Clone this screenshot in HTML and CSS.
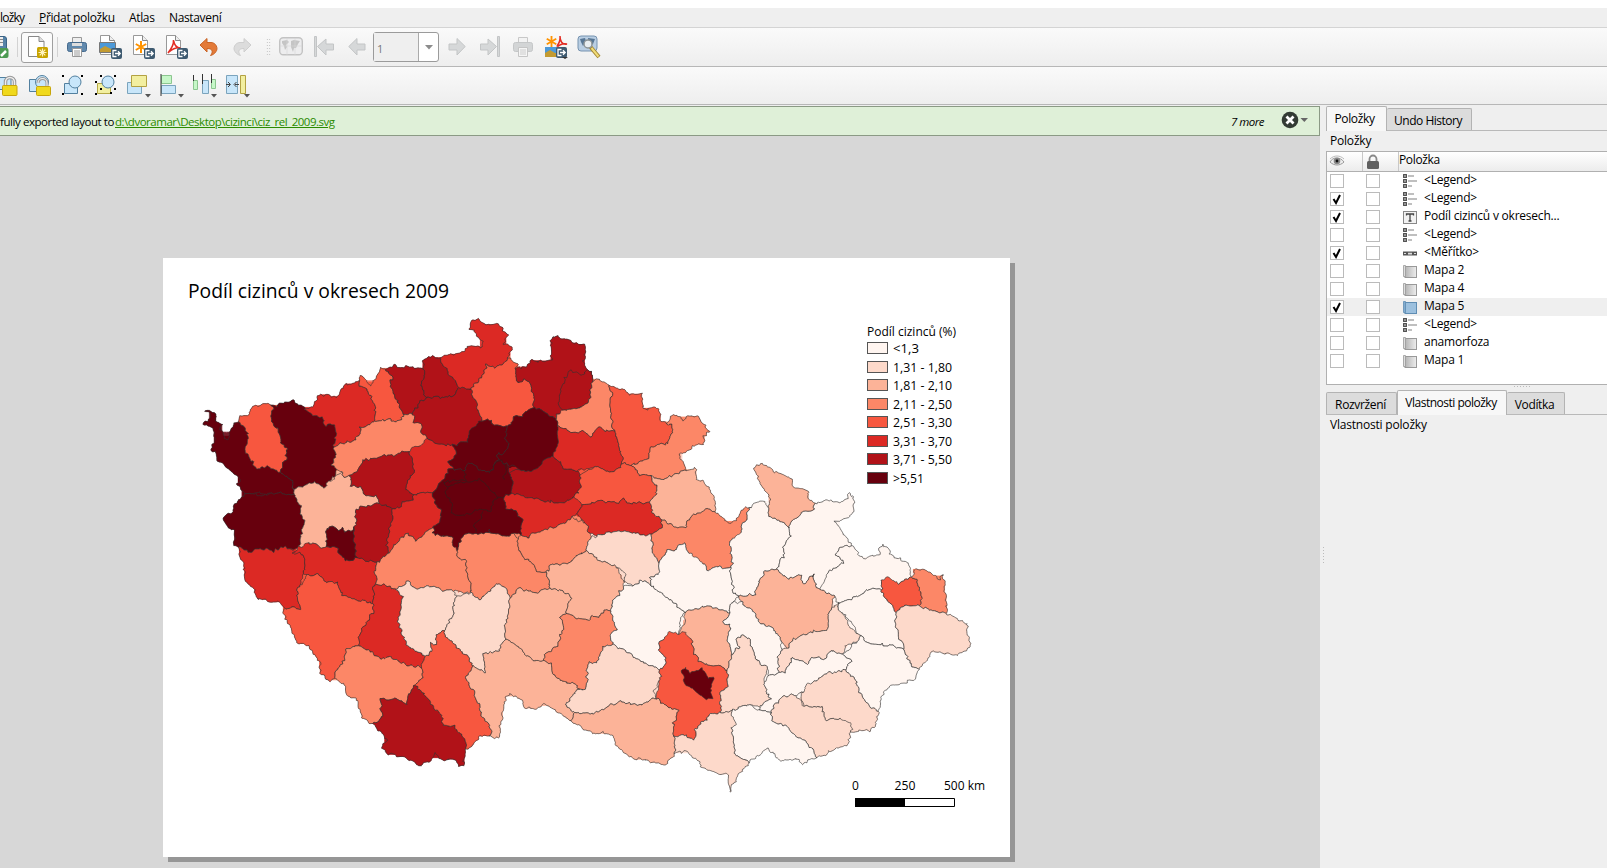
FILE: index.html
```html
<!DOCTYPE html>
<html lang="cs">
<head>
<meta charset="utf-8">
<title>Podíl cizinců v okresech 2009</title>
<link rel="stylesheet" href="styles.css">
</head>
<body>
<svg class="defs" width="0" height="0">
  <defs>
    <linearGradient id="gray" x1="0" x2="1"><stop offset="0" stop-color="#b4b4b4"/><stop offset="1" stop-color="#eee"/></linearGradient>
    <filter id="close" x="-5%" y="-5%" width="110%" height="110%" color-interpolation-filters="sRGB"><feMorphology in="SourceGraphic" operator="dilate" radius="3" result="wide"/><feMorphology in="wide" operator="erode" radius="3" result="tight"/><feComposite in="wide" in2="tight" operator="in"/></filter>
    <symbol id="legend" viewBox="0 0 14 14"><g fill="#fff" stroke="#4a4a4a" stroke-width="1.3"><rect x=".7" y=".7" width="2.6" height="2.6"/><rect x=".7" y="5.7" width="2.6" height="2.6"/><rect x=".7" y="10.7" width="2.6" height="2.6"/></g><path d="M5 2h6M5 7h9M5 12h4" stroke="#aaa" stroke-width="1.6"/></symbol>
    <symbol id="mapitem" viewBox="0 0 14 14"><rect x="2" y="2.5" width="11.5" height="11" fill="url(#gray)" stroke="#999"/><path d="M.5 1.500h2v11h-2z" fill="#ddd" stroke="#999" stroke-width=".8"/></symbol>
    <symbol id="mapsel" viewBox="0 0 14 14"><rect x="2" y="2.500" width="11.500" height="11" fill="#9cc0de" stroke="#5f8db3"/><path d="M.5 1.500h2v11h-2z" fill="#82acd0" stroke="#5f8db3" stroke-width=".8"/></symbol>
    <symbol id="label" viewBox="0 0 14 14"><rect x=".5" y="1.500" width="13" height="12" fill="#f2f2f2" stroke="#888"/><path d="M3.500 5.500V4h7v1.500M7 4v7M5.500 11h3" fill="none" stroke="#444" stroke-width="1.300"/></symbol>
    <symbol id="scale" viewBox="0 0 14 14"><path d="M0 5.500h14v4H0z" fill="#555"/><path d="M5 6.700h4v1.700H5zM1 7h2v1H1zM11 7h2v1h-2z" fill="#ddd"/></symbol>
    <symbol id="page" viewBox="0 0 24 24"><path d="M2.500 .5h9l5 5v14h-14z" fill="#fff" stroke="#999"/><path d="M11.500 .5v5h5" fill="#eee" stroke="#888"/></symbol>
    <symbol id="badge" viewBox="0 0 11 11"><rect width="11" height="11" rx="2" fill="#3e5a70"/><path d="M5.500 2.500H2v6h3.500M4 5.500h5M7 3.300l2.200 2.200L7 7.700" fill="none" stroke="#fff" stroke-width="1.300"/></symbol>
    <symbol id="flower" viewBox="0 0 12 12"><path d="M6 0v12M.8 3l10.400 6M11.200 3L.8 9" stroke="#ff9300" stroke-width="2"/></symbol>
    <symbol id="shackle" viewBox="0 0 16 22"><path d="M3.500 11V7a4.500 4.500 0 0 1 9 0v4" fill="none" stroke="#999" stroke-width="3.500"/><path d="M3.500 11V7a4.500 4.500 0 0 1 9 0v4" fill="none" stroke="#eee" stroke-width="1.400"/><rect x=".5" y="10.500" width="14.500" height="10" rx="1" fill="#f0d91c" stroke="#c7a50a"/></symbol>
    <symbol id="world" viewBox="0 0 24 20"><rect x=".7" y=".7" width="22.600" height="17" rx="3.500" fill="#ededee" stroke="#c3c3c3" stroke-width="1.400"/><path d="M3 4l5-1 2 2-3 3 1 2-2 3-1-4-2-3zM12 4l3-1 6 1-2 3-2 4-2 0-1 4-2-5z" fill="#c5c5c5"/><path d="M8 1v17M16 1v17M1 9h22" stroke="#d6d6d6" stroke-width=".6"/></symbol>
    <symbol id="tri" viewBox="0 0 6 4"><path d="M0 0h6L3 3.500z" fill="#555"/></symbol>
  </defs>
</svg>
<div class="app">
  <nav class="menu"><span class="m1">ložky</span><span class="m2"><u>P</u>řidat položku</span><span class="m3">Atlas</span><span class="m4">Nastavení</span></nav>

  <div class="bar bar1">
    <svg class="savecut" width="9" height="24" viewBox="15 0 9 24"><path d="M0 1.500h19a2.500 2.500 0 0 1 2.500 2.500v14H0z" fill="#5583a8" stroke="#3b6386"/><path d="M5 2h13v9H5z" fill="#eee"/><path d="M15 4.500h3M15 7.500h3" stroke="#888"/><rect x="10" y="13" width="13.500" height="10" rx="2" fill="#4c9a52"/><path d="M16 21l5-5" stroke="#fff" stroke-width="2.500"/></svg>
    <i class="sep"></i>
    <span class="btn"><svg width="24" height="24" viewBox="0 0 24 24"><path d="M3.500 1.500h10.500l5 5v15h-15.500z" fill="#fff" stroke="#888"/><path d="M14 1.500v5h5" fill="#ddd" stroke="#888"/><rect x="12" y="12" width="11" height="11" rx="1.500" fill="#c9a400"/><path d="M17.500 13.500v8M13.500 17.500h8M14.700 14.700l5.600 5.600M20.300 14.700l-5.600 5.600" stroke="#fff4c0" stroke-width="1.200"/></svg></span>
    <i class="sep sep2"></i>
    <span class="slot"><svg width="22" height="22" viewBox="0 0 22 22"><path d="M6.500 1.500h9v6h-9z" fill="#eee" stroke="#999"/><rect x="1.500" y="6.500" width="19" height="9" rx="2" fill="#6189ad" stroke="#456a8d"/><path d="M6 7h10v3H6z" fill="#ddd"/><path d="M6.500 12.500h9v8h-9z" fill="#fff" stroke="#999"/><path d="M8 15h6M8 17h6M8 19h6" stroke="#999"/></svg></span>
    <span class="slot"><svg width="24" height="24"><use href="#page" width="24" height="24"/><path d="M1.500 7.500h16v10h-16z" fill="#4c99d8" stroke="#777"/><path d="M2 14l5-3 6 3 4-1v4H2z" fill="#c39b32"/><use href="#badge" x="13" y="13" width="11" height="11"/></svg></span>
    <span class="slot"><svg width="24" height="24"><use href="#page" width="24" height="24"/><use href="#flower" x="4" y="6" width="12" height="12"/><use href="#badge" x="13" y="13" width="11" height="11"/></svg></span>
    <span class="slot"><svg width="24" height="24"><use href="#page" width="24" height="24"/><path d="M4 18C8 13 10 9 9.500 5c1 7 4 8 7 8-5-1-8 1-11.500 4" fill="none" stroke="#e22d24" stroke-width="1.600"/><use href="#badge" x="13" y="13" width="11" height="11"/></svg></span>
    <span class="slot"><svg width="20" height="20" viewBox="0 0 20 20"><path d="M1 8L8 1.500V5.500h4c5 0 7.500 6 5 9-1.500 2.500-3.500 3.500-5.500 4 2.500-3 3-7-3.500-7V15z" fill="#e37a38" stroke="#c96426"/></svg></span>
    <span class="slot"><svg width="20" height="20" viewBox="0 0 20 20"><path d="M19 8l-7-6.500V5.500H8c-5 0-7.500 6-5 9 1.500 2.500 3.500 3.500 5.500 4C6 15.500 5.500 11.500 12 11.500V15z" fill="#dcdcdc" stroke="#cecece"/></svg></span>
    <i class="grip"></i>
    <span class="slot"><svg width="24" height="20"><use href="#world" width="24" height="20"/></svg></span>
    <span class="slot"><svg width="20" height="22" viewBox="0 0 20 22"><path d="M.5.500h2v20h-2zM3.500 10.500L12 3v5h7.500v6H12v5z" fill="#d6d8d9" stroke="#c3c5c6"/></svg></span>
    <span class="slot"><svg width="18" height="22" viewBox="0 0 18 22"><path d="M.8 10.500L9 2.500V8h8v6H9v5z" fill="#d6d8d9" stroke="#c3c5c6"/></svg></span>
    <span class="combo"><b>1</b><i><svg width="8" height="5" viewBox="0 0 8 5"><path d="M0 0h8L4 4.500z" fill="#8c8c8c"/></svg></i></span>
    <span class="slot"><svg width="18" height="22" viewBox="0 0 18 22"><path d="M17.200 10.500L9 2.500V8H1v6h8v5z" fill="#d6d8d9" stroke="#c3c5c6"/></svg></span>
    <span class="slot"><svg width="20" height="22" viewBox="0 0 20 22"><path d="M17.500.500h2v20h-2zM16.500 10.500L8 3v5H.5v6H8v5z" fill="#d6d8d9" stroke="#c3c5c6"/></svg></span>
    <span class="slot"><svg width="22" height="22" viewBox="0 0 22 22"><path d="M6.500 1.500h9v6h-9z" fill="#f3f3f3" stroke="#c8c8c8"/><rect x="1.500" y="6.500" width="19" height="9" rx="2" fill="#d3d5d6" stroke="#c5c7c8"/><path d="M6.500 11.500h9v9h-9z" fill="#f5f5f5" stroke="#c5c5c5"/><path d="M8 14h6M8 16h6M8 18h6" stroke="#ccc"/></svg></span>
    <span class="slot"><svg width="24" height="24" viewBox="0 0 24 24"><use href="#flower" x="2" y="1" width="11" height="11"/><path d="M13 11c4-5 3-8 3-10 0 5 2 9 7 8-5-1-8 1-11 4" fill="none" stroke="#e22d24" stroke-width="1.500"/><path d="M1 12h12v10H1z" fill="#4c99d8"/><path d="M1 18l5-3 5 3h2v4H1z" fill="#c39b32"/><use href="#badge" x="12" y="12" width="11" height="11"/><path d="M18 22h6l-3 2z" fill="#333"/></svg></span>
    <span class="slot"><svg width="24" height="24" viewBox="0 0 24 24"><rect x="1" y="1" width="19" height="15" rx="3" fill="#b9cee3" stroke="#7693b0"/><path d="M3 4l5-1 1 3-3 5-2-4zM11 3l7 1-2 5-4 2z" fill="#587795"/><path d="M13.500 12l8.500 10" stroke="#a28634" stroke-width="4"/><path d="M14.500 13l7 8.500" stroke="#f1dc78" stroke-width="2"/><circle cx="11" cy="9" r="4" fill="#e9eef1" stroke="#8d9497" stroke-width="1.500"/></svg></span>
  </div>

  <div class="bar bar2">
    <span class="slot"><svg width="24" height="24" viewBox="0 0 24 24"><path d="M0 3.500h16v12H0z" fill="#c8e6fa" stroke="#52809f"/><use href="#shackle" x="7" y="1" width="16" height="22"/></svg></span>
    <span class="slot"><svg width="24" height="24" viewBox="0 0 24 24"><path d="M1.500 5.500h15v12h-15z" fill="#c8e6fa" stroke="#52809f"/><circle cx="14" cy="8" r="6.500" fill="#c8e6fa" stroke="#52809f"/><path d="M10 9a4.500 4.500 0 0 1 9 0v4" fill="none" stroke="#999" stroke-width="3"/><path d="M10 9a4.500 4.500 0 0 1 9 0v4" fill="none" stroke="#eee" stroke-width="1.200"/><rect x="8.500" y="12.500" width="14" height="9" rx="1" fill="#f0d91c" stroke="#c7a50a"/></svg></span>
    <span class="slot"><svg width="24" height="24" viewBox="0 0 24 24"><path d="M3.500 9.500h13v10h-13z" fill="#c8e6fa" stroke="#52809f"/><circle cx="14" cy="8" r="6" fill="#c8e6fa" stroke="#52809f"/><path d="M1 1h2v2H1zM20 1h2v2h-2zM1 19h2v2H1zM20 19h2v2h-2z"/></svg></span>
    <span class="slot"><svg width="24" height="24" viewBox="0 0 24 24"><path d="M3.500 9.500h13v10h-13z" fill="#f2efa0" stroke="#b5a945"/><circle cx="14" cy="8" r="6" fill="#c8e6fa" stroke="#52809f"/><path d="M6 1h2v2H6zM20 1h2v2h-2zM20 14h2v2h-2zM1 7h2v2H1zM6 14h2v2H6zM1 19h2v2H1zM16 18h2v2h-2z"/></svg></span>
    <span class="slot"><svg width="26" height="24" viewBox="0 0 26 24"><path d="M1.500 8.500h14v11h-14z" fill="#c8e6fa" stroke="#7ba4bd"/><path d="M5.500 1.500h15v11h-15z" fill="#f2efa0" stroke="#b3a243"/><use href="#tri" x="19" y="20" width="6" height="4"/></svg></span>
    <span class="slot"><svg width="26" height="24" viewBox="0 0 26 24"><path d="M2.500 1.500h10v8h-10z" fill="#c6f7c8" stroke="#8cc690"/><path d="M2.500 11.500h14v8h-14z" fill="#c8e6fa" stroke="#7ba4bd"/><path d="M2 0v22" stroke="#333"/><use href="#tri" x="19" y="20" width="6" height="4"/></svg></span>
    <span class="slot"><svg width="26" height="24" viewBox="0 0 26 24"><path d="M1.500 6.500h4v9h-4zM19.500 5.500h4v9h-4z" fill="#c6f7c8" stroke="#8cc690"/><path d="M10.500 6.500h6v13h-6z" fill="#c8e6fa" stroke="#7ba4bd"/><path d="M1.500 1v6M10.500 0v10M19.500 0v9" stroke="#333"/><use href="#tri" x="19" y="20" width="6" height="4"/></svg></span>
    <span class="slot"><svg width="26" height="24" viewBox="0 0 26 24"><path d="M1.500 1.500h11v18h-11z" fill="#c8e6fa" stroke="#7ba4bd"/><path d="M15.500 1.500h5v18h-5z" fill="#f2efa0" stroke="#b3a243"/><path d="M1 10.500h4M3 8L5.500 10.500 3 13M14 10.500h-4M11.500 8L9 10.500l2.500 2.500" stroke="#444" fill="none"/><use href="#tri" x="19" y="20" width="6" height="4"/></svg></span>
  </div>

  <div class="work">
    <main class="canvas">
      <div class="message">
        <span class="done">fully exported layout to</span><a>d:\dvoramar\Desktop\cizinci\ciz_rel_2009.svg</a>
        <em>7 more</em>
        <svg width="27" height="18" viewBox="0 0 27 18"><circle cx="9" cy="9" r="8.300" fill="#333b34"/><path d="M5.500 5.500l7 7M12.500 5.500l-7 7" stroke="#fff" stroke-width="2.800"/><path d="M19.500 7h7.500l-3.700 4z" fill="#666"/></svg>
      </div>
      <div class="paper">
        <svg id="sheet" width="847" height="599" viewBox="163 258 847 599">
          <g id="base" filter="url(#close)"></g>
          <g id="districts"></g>
          <g id="inner"></g>
          <text class="title" x="188" y="298" textLength="261" lengthAdjust="spacingAndGlyphs">Podíl cizinců v okresech 2009</text>
          <g id="legend-box"></g>
          <g class="t13">
            <text x="867" y="336" textLength="89" lengthAdjust="spacingAndGlyphs">Podíl cizinců (%)</text>
            <text x="852" y="790">0</text><text x="894.500" y="790" textLength="21" lengthAdjust="spacingAndGlyphs">250</text><text x="944" y="790" textLength="41" lengthAdjust="spacingAndGlyphs">500 km</text>
          </g>
          <path d="M855.500 798.500h99v8h-99z" fill="#fff" stroke="#000"/><path d="M855 798h50v9h-50z"/>
        </svg>
      </div>
    </main>
    <i class="vgrip"></i>
    <aside>
      <div class="tabs tabs1"><span class="tab on">Položky</span><span class="tab">Undo History</span></div>
      <div class="cap">Položky</div>
      <div class="list">
        <div class="head">
          <span><svg width="16" height="12" viewBox="0 0 16 12"><path d="M1 7C4 1.500 11 1.500 15 7 11 11 5 11 1 7z" fill="#eee" stroke="#999"/><circle cx="8" cy="6" r="3.300" fill="#888"/><circle cx="8" cy="6" r="1.400" fill="#111"/><path d="M1 4C5 0 11 0 15 4" fill="none" stroke="#bbb"/></svg></span>
          <span><svg width="14" height="16" viewBox="0 0 14 16"><path d="M3.500 8V5a3.500 3.500 0 0 1 7 0v3" fill="none" stroke="#888" stroke-width="1.800"/><rect x="1" y="7" width="12" height="8" rx="1.500" fill="#606060"/></svg></span>
          <span>Položka</span>
        </div>
        <div id="rows"></div>
      </div>
      <i class="hgrip"></i>
      <div class="tabs tabs2"><span class="tab">Rozvržení</span><span class="tab on">Vlastnosti položky</span><span class="tab">Vodítka</span></div>
      <div class="cap cap2">Vlastnosti položky</div>
    </aside>
  </div>
</div>
<script src="map.js"></script>
</body>
</html>
```
FILE: styles.css
```css
* { box-sizing: border-box; }
body { margin: 0; background: #fff; font: 12px/16px "Open Sans", "Noto Sans", sans-serif; color: #000; overflow: hidden; }
.defs { position: absolute; }
i { font-style: normal; }
.app { width: 1607px; height: 868px; padding-top: 8px; display: flex; flex-direction: column; overflow: hidden; }
.menu { height: 20px; background: #efefef; border-bottom: 1px solid #d4d4d4; display: flex; flex: none; padding-top: 2px; white-space: nowrap; }
.menu span { letter-spacing: -.35px; }
.menu .m1 { width: 39px; margin-left: 0; letter-spacing: -.8px; }
.menu .m2 { width: 90px; }
.menu .m3 { width: 40px; }
.bar { display: flex; align-items: center; flex: none; background: linear-gradient(#fafafa, #eee); border-bottom: 1px solid #b7b7b7; }
.bar1 { height: 39px; }
.bar2 { height: 38px; padding-top: 1px; }
.bar2 .slot:first-child { margin-left: -10px; }
.bar svg { flex: none; display: block; }
.slot { width: 33px; height: 24px; display: flex; align-items: center; justify-content: center; flex: none; }
.sep { width: 1px; height: 20px; background: #d2d2d2; margin: 0 3px 0 8px; }
.sep2 { margin: 0 2px 0 4px; }
.btn { width: 32px; height: 31px; border: 1px solid #9f9f9f; border-radius: 3px; background: #fbfbfb; display: flex; align-items: center; justify-content: center; }
.grip { width: 5px; height: 18px; margin: 0 3px 0 8px; background: radial-gradient(circle, #bbb 35%, transparent 40%) 0 0 / 2.500px 3px; }
.combo { width: 66px; height: 30px; border: 1px solid #9b9b9b; border-radius: 3px; display: flex; background: #fff; color: #777; margin-right: 1px; }
.combo b { flex: 1; background: #efefef; font-weight: 400; padding: 8px 3px; line-height: 15px; font-size: 11px; }
.combo i { width: 20px; border-left: 1px solid #aaa; display: flex; align-items: center; justify-content: center; }
.work { flex: 1; display: flex; background: #efefef; min-height: 0; }
.canvas { width: 1320px; flex: none; padding-top: 1px; background: #d7d7d7; box-shadow: inset 0 1px #efefef; }
.message { height: 30px; background: #dff0d8; border: 1px solid #8b9a85; border-left: 0; display: flex; align-items: center; white-space: nowrap; font-size: 11.500px; padding-top: 1px; }
.message .done { width: 115px; letter-spacing: -.43px; }
.message a { color: #2b8b00; text-decoration: underline; letter-spacing: -.48px; }
.message em { margin-left: auto; width: 50px; font-size: 11.500px; letter-spacing: -.5px; }
.message svg { margin: -3px 11px 0 0; }
.paper { width: 847px; height: 599px; margin: 122px 0 0 163px; background: #fff; box-shadow: 5px 5px #969696; }
.paper svg { display: block; font-family: "Open Sans", "Noto Sans", sans-serif; }
#districts path { stroke: #333; stroke-opacity: .8; stroke-width: .8; stroke-linejoin: round; }
#inner path { fill: none; stroke: #3a1a1a; stroke-width: .9; }
.title { font-size: 20px; }
.t13 { font-size: 12px; }
.vgrip { width: 5px; height: 17px; margin-top: 441px; background: radial-gradient(circle, #bbb 35%, transparent 40%) 2px 0 / 3px 3px repeat-y; }
aside { margin-left: 1px; flex: 1; display: flex; flex-direction: column; min-width: 0; }
.tabs { display: flex; align-items: flex-end; height: 25px; border-bottom: 1px solid #b9b9b9; flex: none; }
.tabs1 { margin-top: 1px; }
.tab { height: 22px; border: 1px solid #b3b3b3; border-radius: 2px 2px 0 0; background: #dcdcdc; text-align: center; padding: 4px 2px 0 0; white-space: nowrap; letter-spacing: -.35px; margin-bottom: 0; border-bottom: 0; border-left: 0; }
.tab.on { height: 25px; margin-bottom: -1px; background: #f7f7f7; border-left: 1px solid #b3b3b3; padding-top: 4px; }
.tabs1 .tab { width: 85px; letter-spacing: -.5px; }
.tabs1 .tab.on { width: 61px; letter-spacing: -.35px; padding-right: 4px; }
.tabs2 .tab:nth-child(1) { width: 71px; border-left: 1px solid #b3b3b3; }
.tabs2 .tab:nth-child(2) { width: 110px; letter-spacing: -.5px; }
.tabs2 .tab:nth-child(3) { width: 58px; }
.cap { height: 20px; padding: 2px 4px; flex: none; letter-spacing: -.2px; }
.list { height: 234px; border: 1px solid #b0b0b0; border-right: 0; background: #fff; flex: none; }
.head { height: 20px; display: flex; background: linear-gradient(#fff, #ececec); border-bottom: 1px solid #b0b0b0; }
.head span { width: 36px; border-right: 1px solid #c8c8c8; padding: 3px 0 0 2px; display: flex; align-items: flex-start; }
.head span:nth-child(2) { padding: 2px 0 0 3px; }
.head span:nth-child(3) { border: 0; padding: 0; letter-spacing: -.35px; width: 60px; }
.row { height: 18px; display: flex; align-items: center; }
.row.sel { background: #efefef; }
.box { width: 14px; height: 14px; border: 1px solid #bbb; background: #fff; margin: 0 0 1px 3px; display: flex; flex: none; }
.box + .box { margin-left: 22px; }
.row .ico { margin: 0 7px 1px 23px; flex: none; }
.row b { font-weight: 400; letter-spacing: -.22px; margin-top: -3px; white-space: nowrap; }
.hgrip { height: 3px; width: 17px; margin: 0 0 1px 187px; flex: none; background: radial-gradient(circle, #bbb 35%, transparent 40%) 0 0 / 3px 3px; }
.tabs2 { margin-top: 2px; height: 24px; }
```
FILE: map.js
```js
const NS = 'http://www.w3.org/2000/svg';
const C = ['', '#fff5f0', '#fdd9ca', '#fcb398', '#fc8767', '#f7573f', '#dc2924', '#b11218', '#67000d'];

// Map sections: origin of each local grid, three grid units per pixel.
const origin = { A: [190, 300], B: [410, 300], C: [220, 530], D: [450, 530], E: [640, 440], F: [800, 480], G: [560, 350] };

const districts = [
['A',8,'48,333 57,336 75,334 79,346 77,364 97,370 95,378 88,380 101,398 101,418 115,417 117,400 133,368 146,366 168,385 176,410 166,440 176,468 195,502 232,500 250,505 275,520 305,548 311,568 312,582 290,584 270,577 240,580 210,578 168,582 155,570 142,556 150,538 143,528 120,512 98,492 85,482 80,460 65,450 65,428 74,420 71,395 60,383 55,374 40,370 55,358 58,346'],
['A',5,'150,349 175,340 195,316 243,312 250,330 242,346 250,370 266,392 270,428 290,445 288,482 278,488 276,518 250,505 232,498 218,500 210,508 190,490 178,478 166,462 170,440 174,422 174,405 165,380 150,368'],
['A',8,'245,315 262,322 270,310 290,302 310,300 325,312 345,330 365,345 398,355 405,375 436,376 437,400 430,440 438,460 425,492 440,508 437,525 412,545 406,567 385,550 365,545 340,558 315,566 300,545 278,520 275,492 290,480 289,450 270,428 268,395 248,370 243,345'],
['A',8,'168,582 185,578 210,590 235,578 275,578 295,588 322,582 332,620 330,640 345,662 335,690 328,740 300,745 285,740 260,750 225,745 175,755 145,742 135,735 133,692 112,682 100,655 128,635 130,618 150,600'],
['A',3,'315,566 340,558 365,545 385,550 406,567 414,543 435,540 440,520 455,520 465,530 480,525 482,556 510,560 530,585 558,588 568,608 540,618 510,622 497,650 498,675 480,692 455,680 445,688 425,682 410,684 410,740 390,740 370,728 355,742 328,735 333,700 345,662 330,640 334,620'],
['A',6,'345,330 370,322 383,285 415,288 440,292 465,250 480,255 505,242 512,262 530,268 545,290 557,325 555,362 530,380 512,380 508,405 490,425 460,432 437,445 430,430 436,376 405,375 398,355 365,345'],
['A',5,'512,225 525,240 540,254 560,235 575,200 590,205 605,232 603,262 615,285 632,325 635,362 615,365 600,360 562,358 557,325 545,290 530,265 510,258 507,240'],
['A',7,'590,205 615,197 630,205 655,200 700,210 695,245 700,270 715,295 690,305 670,340 640,342 632,325 615,285 603,262 605,232'],
['A',4,'437,445 475,425 490,430 508,405 512,380 530,380 555,360 600,362 635,365 640,345 668,340 670,370 698,375 695,395 713,412 700,440 660,465 640,455 610,468 580,465 520,480 510,500 500,520 475,525 455,520 440,510 435,490 440,470 430,450'],
['C',6,'55,60 80,65 120,60 160,65 205,60 250,75 258,100 250,135 240,165 232,200 238,235 192,235 170,215 140,210 110,205 105,180 75,150 70,95 60,90'],
['C',6,'215,70 235,53 265,40 300,50 320,50 355,55 360,75 380,92 408,85 430,90 468,97 470,165 460,175 460,220 400,205 360,190 350,155 320,160 295,130 262,135 250,120 255,95 240,70'],
['A',7,'568,608 605,625 607,660 595,700 592,740 597,760 575,775 560,790 530,780 500,775 495,740 488,700 497,660 500,630 540,618'],
['A',8,'410,684 425,690 455,680 465,695 492,684 495,708 498,740 500,755 498,772 470,782 450,765 445,745 415,740'],
['B',6,'-5,455 30,435 50,420 75,430 130,435 140,462 115,490 130,505 100,540 70,575 65,582 35,580 8,585 -15,565 -10,540 10,525 5,480'],
['A',7,'478,530 505,510 515,485 545,478 580,465 610,468 640,458 660,470 672,510 650,535 650,560 675,590 665,600 640,605 635,620 605,622 568,608 558,588 530,585 510,560 475,555 485,545'],
['B',6,'-55,625 -20,620 -20,605 5,600 15,585 40,580 65,582 75,610 95,640 90,665 70,685 40,705 18,722 -5,700 -30,715 -50,740 -63,760 -68,740 -65,700 -53,660'],
['B',7,'37,180 70,168 90,172 97,190 120,225 147,262 135,285 100,292 55,295 40,285 35,250 45,230'],
['B',7,'25,305 55,295 100,295 135,285 147,265 185,270 190,290 205,335 218,360 200,390 175,395 172,425 130,435 75,430 50,420 30,400 40,375 15,370 10,335 20,325'],
['B',6,'92,175 165,155 175,138 217,142 222,122 200,112 190,93 180,85 185,65 205,55 215,65 240,78 265,70 275,82 293,105 280,135 308,137 295,175 280,195 255,200 230,193 220,220 205,240 190,270 148,265 120,225 97,195'],
['B',5,'190,270 200,245 215,230 230,195 255,203 280,195 290,178 322,190 317,220 325,250 345,240 360,250 372,290 370,320 345,340 330,350 318,347 300,372 275,377 250,375 245,362 218,360 205,335 195,300'],
['B',7,'317,205 350,200 365,180 410,185 425,180 424,130 420,118 440,104 455,115 485,120 490,112 495,130 520,135 525,152 520,185 545,215 545,245 540,290 530,310 440,345 435,355 400,335 375,322 372,290 365,255 345,240 330,248 320,230'],
['B',7,'465,235 480,210 505,218 520,225 530,207 545,220 545,245 540,290 510,325 455,328 445,310 450,280'],
['B',4,'435,350 450,330 510,325 522,305 540,295 545,255 568,237 600,258 605,290 600,320 605,360 612,395 585,395 565,380 545,410 520,395 470,390 445,375'],
['B',8,'220,358 245,362 255,378 290,380 285,410 295,440 280,460 262,458 262,480 240,520 210,508 175,488 165,510 140,512 115,490 140,465 130,435 172,425 175,395'],
['B',8,'290,375 318,347 340,352 375,322 400,332 430,350 445,380 443,430 430,470 400,482 375,510 350,515 315,500 295,495 270,480 262,460 290,450 285,400'],
['B',7,'300,515 335,508 375,515 400,485 425,475 455,485 460,505 500,512 512,540 505,575 470,605 435,605 410,605 375,595 345,590 300,580 305,545'],
['B',6,'445,380 480,395 520,395 540,410 565,385 585,395 610,400 625,440 637,490 630,505 600,515 560,500 510,512 460,505 455,485 430,470 445,440'],
['B',6,'280,592 300,588 345,592 375,598 410,608 450,605 470,605 495,590 520,600 520,615 500,640 470,665 440,680 400,690 370,700 350,712 333,705 335,660 320,630 285,625'],
['G',5,'150,107 195,120 205,133 245,132 253,178 290,172 300,180 300,215 320,222 337,225 337,250 325,280 270,290 265,325 215,345 190,348 187,320 170,260 155,240 158,200 152,170 158,130'],
['G',4,'318,215 335,195 350,195 370,213 385,195 415,200 447,243 432,262 430,280 400,290 360,312 358,325 370,335 380,360 330,378 310,388 270,380 240,375 220,345 265,325 268,292 325,285 340,250 332,225'],
['G',5,'62,370 110,345 145,365 190,350 220,352 240,378 270,382 290,410 292,435 270,455 215,462 190,447 170,460 130,452 75,465 50,435 62,410'],
['G',6,'70,467 130,452 175,460 195,447 215,462 265,455 275,485 305,510 305,535 275,555 250,555 205,543 150,548 110,558 90,548 75,520 50,497'],
['G',3,'270,380 310,388 380,365 385,355 405,355 412,385 430,390 465,445 463,488 440,478 400,495 375,530 345,530 310,515 300,500 280,485 272,455 290,435 290,410'],
['G',4,'310,515 350,530 375,530 385,510 435,478 470,490 510,520 535,500 550,475 570,468 555,515 545,530 543,560 510,575 517,640 510,655 470,650 442,662 435,645 400,640 388,610 370,580 345,600 325,600 300,638 285,625 275,570 278,550 305,535'],
['C',4,'470,100 505,70 545,30 565,10 590,35 635,0 650,15 700,25 720,30 712,60 715,85 738,95 740,140 752,190 700,180 665,180 640,165 600,175 570,155 530,180 500,165 470,165 465,130'],
['D',4,'20,55 40,15 120,10 190,10 205,25 210,60 250,105 285,130 302,175 260,185 205,178 180,200 170,175 135,160 115,190 85,208 62,190 65,165 48,135 52,100 22,75'],
['D',4,'213,18 280,0 365,-38 400,-20 422,20 410,60 385,75 370,90 335,105 305,103 285,130 260,120 215,75 205,50 205,25'],
['B',8,'115,510 140,512 165,505 175,488 210,508 240,520 270,482 300,500 305,540 300,575 290,590 280,592 285,625 320,630 335,660 330,705 290,708 245,700 240,688 225,700 190,702 155,708 155,720 140,740 128,735 125,712 100,708 70,700 95,660 95,640 70,590 100,550'],
['D',2,'420,20 450,22 495,5 550,8 600,15 607,50 610,80 630,100 625,135 600,140 602,165 575,150 550,168 525,155 525,130 500,110 440,90 408,60'],
['C',5,'230,172 260,140 295,128 320,158 355,155 360,190 400,205 458,222 460,250 430,290 415,345 380,355 370,400 348,425 345,445 328,457 300,430 298,395 265,350 230,340 210,290 190,250 195,235 238,235 232,200'],
['C',6,'460,180 470,165 500,165 530,180 548,200 540,240 532,275 545,310 560,345 615,380 605,410 560,408 510,380 480,385 412,350 415,320 430,290 460,250'],
['C',2,'530,178 555,160 572,155 580,172 640,165 665,185 700,180 712,200 700,250 680,290 672,300 650,310 650,345 632,340 625,375 605,378 560,345 550,310 530,275 542,250 548,205'],
['D',2,'20,190 62,190 85,208 115,190 125,160 170,175 182,205 178,250 162,290 165,325 145,365 100,370 105,425 90,420 70,410 40,370 -15,320 -18,295 10,250 10,215'],
['C',4,'412,350 480,385 510,378 560,408 608,412 610,445 585,465 565,490 560,520 530,508 483,508 485,545 475,575 460,580 425,560 410,505 385,500 370,460 345,440 350,420 370,400 378,355'],
['C',7,'483,508 530,508 562,520 568,490 580,468 610,490 640,530 665,555 670,590 700,585 735,630 735,680 730,708 715,708 700,685 670,690 645,670 635,690 595,708 560,685 500,670 487,650 503,632 460,582 483,565'],
['C',5,'605,410 610,385 635,360 635,335 652,340 652,310 668,297 685,325 740,375 760,410 740,440 750,470 770,510 785,555 815,600 810,620 780,615 765,640 738,660 735,630 700,585 670,590 665,555 640,530 610,490 582,465 610,445'],
['D',3,'50,440 72,410 105,425 100,370 145,365 165,330 200,345 230,380 280,395 305,400 310,435 340,455 375,460 390,478 345,522 375,550 360,572 310,535 280,520 265,535 230,535 215,510 180,492 165,505 150,590 145,625 122,620 120,590 90,550 90,520 70,480'],
['D',3,'180,200 205,180 260,185 300,180 340,182 365,205 350,250 332,260 340,290 325,345 285,375 282,392 250,390 200,345 168,328 165,295 178,250'],
['D',3,'285,130 305,103 335,105 370,90 408,62 440,90 500,110 525,155 515,180 490,210 480,245 465,240 445,260 430,255 420,272 385,265 355,250 352,225 365,205 340,182 302,180 300,160'],
['D',4,'340,255 355,250 385,265 420,272 430,255 445,260 470,240 480,250 500,295 482,315 490,345 460,350 440,400 415,395 410,450 405,478 385,475 378,455 340,455 310,435 305,398 280,392 290,370 325,345 340,300 332,270'],
['D',1,'520,170 550,168 575,150 600,165 650,200 700,245 690,280 685,310 640,325 628,345 645,385 638,415 610,410 580,400 540,370 490,345 485,315 500,295 480,245 490,210'],
['D',2,'460,350 490,348 540,370 580,400 625,420 632,450 612,485 618,502 570,525 510,515 460,535 430,552 375,552 345,522 390,480 405,478 412,400 440,402'],
['D',3,'375,550 430,555 460,535 510,518 570,527 618,505 655,530 688,540 670,580 672,620 675,670 645,705 545,683 500,645 490,620 460,605 430,612 390,590 360,572'],
['E',1,'60,370 65,350 90,325 130,318 150,350 200,390 265,385 275,430 285,465 295,470 270,520 235,505 190,500 130,518 90,480 30,440 30,410 55,405'],
['E',3,'130,518 190,498 235,505 270,520 252,545 272,560 262,590 275,640 262,690 230,675 200,675 180,665 165,640 155,600 120,575 135,545'],
['E',5,'60,600 90,577 130,575 160,600 165,650 200,680 230,675 265,690 265,740 240,760 243,820 210,825 165,870 163,900 130,885 100,885 105,850 118,810 90,795 45,770 60,700 75,670 55,630'],
['E',8,'125,697 135,682 150,703 170,690 190,683 205,716 225,712 213,745 215,775 195,775 160,745 135,730'],
['E',1,'330,195 370,182 385,205 390,230 445,262 450,290 430,320 430,350 410,388 375,395 350,440 345,462 295,465 270,430 265,385 275,370 268,305 305,275 310,240'],
['E',1,'525,190 560,180 600,187 618,178 625,160 640,170 643,210 625,232 583,245 610,280 635,318 600,322 585,345 612,368 570,390 560,430 540,445 520,402 490,432 485,405 440,415 412,388 430,350 430,325 450,290 450,262 490,215 520,212'],
['E',3,'343,85 360,68 400,95 455,115 460,140 505,155 505,175 528,185 525,210 490,215 460,240 450,265 410,240 385,220 390,170 365,140'],
['F',1,'55,325 90,270 130,245 105,225 125,200 155,200 190,237 215,230 240,222 238,205 247,194 262,202 270,225 300,235 325,250 335,290 300,310 245,300 245,330 215,325 160,355 115,368 105,350'],
['E',3,'295,465 345,462 360,420 380,390 410,388 440,415 485,405 490,432 520,405 530,440 590,475 575,505 560,570 510,575 460,600 440,622 425,600 400,565 370,555 335,510'],
['F',1,'110,368 160,355 215,328 245,332 250,350 275,370 288,395 285,430 312,510 270,495 210,490 190,475 170,460 160,430 115,390'],
['F',5,'245,300 260,290 295,308 335,295 350,300 367,360 360,378 315,375 288,395 275,375 245,350'],
['F',4,'340,290 350,268 385,275 418,297 430,285 435,330 440,400 410,395 370,380 367,350 350,310'],
['F',2,'288,395 315,378 365,378 410,400 440,400 500,430 513,500 470,525 400,515 355,568 335,560 310,510 285,430'],
['E',2,'425,625 445,625 460,600 510,575 560,570 565,530 590,495 605,520 640,580 660,590 650,605 615,615 610,642 570,632 555,655 515,655 500,675 460,650 435,700 415,695 415,650'],
['E',1,'275,490 300,485 335,510 370,555 400,570 425,610 415,650 415,705 385,710 380,685 345,655 325,595 300,585 290,600 300,620 275,640 265,610 270,570 255,540 275,525'],
['E',2,'300,585 320,590 345,655 380,685 375,740 390,780 360,800 325,795 275,812 245,820 240,770 265,745 265,690 275,645 300,620 290,600'],
['E',1,'385,710 435,700 460,650 500,675 515,658 555,655 575,632 610,642 635,660 615,690 560,700 520,730 490,755 430,770 405,795 390,815 360,812 358,795 390,770 372,725'],
['F',1,'130,520 160,485 185,475 215,490 270,495 312,510 330,560 350,570 345,600 265,620 245,650 235,695 195,670 165,600 135,570 155,545'],
['F',2,'0,640 20,610 70,578 135,572 165,600 195,670 230,697 225,735 210,752 155,755 120,715 80,722 65,680 15,680'],
['E',2,'395,815 430,775 465,765 490,800 545,795 550,830 580,838 600,835 635,855 635,880 620,920 590,922 550,950 530,952 500,905 460,885 440,860 395,840'],
['E',1,'275,820 325,795 360,815 395,815 395,840 440,860 500,905 530,950 490,970 470,955 430,965 380,925 330,968 285,945 280,900 275,870'],
['E',2,'118,885 163,900 170,870 210,822 275,815 285,850 275,890 285,945 328,968 290,1010 270,1055 265,1005 230,1000 185,985 180,960 135,935 105,935 100,900']
];
// Borders inside the Prague area, on grid B.
const inner = ['110,558 135,552 170,545 210,538 232,560 245,572 265,592 250,605 245,635 220,625 195,632 150,650 125,640 128,610 110,590 110,558', '110,558 100,545 165,540 165,525 155,505', '215,632 212,655 192,675 200,700', '240,520 258,490 275,482 290,500 285,520 275,530 290,540', '262,592 285,592'];

// Join near-identical corners so neighbours share one border.
const nodes = [];
function node(x, y) {
  let best = null, d = 3.6;
  for (const n of nodes) { const e = Math.hypot(n[0] - x, n[1] - y); if (e < d) { d = e; best = n; } }
  if (!best) { best = [x, y]; nodes.push(best); }
  return best;
}
const rings = districts.map(([o, c, s]) => {
  const ring = s.split(' ').map(p => { const [x, y] = p.split(',').map(Number); return node(origin[o][0] + x / 3, origin[o][1] + y / 3); });
  return [c, ring.filter((p, i) => p !== ring[(i + 1) % ring.length])];
});
function split(a, b, depth) {
  const dx = b[0] - a[0], dy = b[1] - a[1], L = dx * dx + dy * dy;
  let hit = null, best = 3.2;
  for (const n of nodes) {
    if (n === a || n === b) continue;
    const t = ((n[0] - a[0]) * dx + (n[1] - a[1]) * dy) / L;
    if (t < .08 || t > .92) continue;
    const d = Math.abs((n[0] - a[0]) * dy - (n[1] - a[1]) * dx) / Math.sqrt(L);
    if (d < best) { best = d; hit = n; }
  }
  return hit && depth < 5 ? [...split(a, hit, depth + 1), ...split(hit, b, depth + 1)] : [a];
}
// Smooth lattice noise gives the borders their ragged course.
function rnd(i, j, k) { const s = Math.sin(i * 127.1 + j * 311.7 + k * 74.7) * 43758.5453; return s - Math.floor(s) - .5; }
function noise(x, y, k) {
  x /= 2.2; y /= 2.2;
  const i = Math.floor(x), j = Math.floor(y), u = x - i, v = y - j;
  return (rnd(i, j, k) * (1 - u) + rnd(i + 1, j, k) * u) * (1 - v) + (rnd(i, j + 1, k) * (1 - u) + rnd(i + 1, j + 1, k) * u) * v;
}
function ragged(points, closed) {
  const out = [];
  points.forEach((a, i) => {
    if (!closed && i === points.length - 1) return;
    const b = points[(i + 1) % points.length], n = Math.max(1, Math.round(Math.hypot(b[0] - a[0], b[1] - a[1]) / 1.1));
    for (let k = 0; k < n; k++) {
      const x = a[0] + (b[0] - a[0]) * k / n, y = a[1] + (b[1] - a[1]) * k / n;
      out.push((x + 3.6 * noise(x, y, 1)).toFixed(1) + ' ' + (y + 3.6 * noise(x, y, 2)).toFixed(1));
    }
  });
  return 'M' + out.join('L') + (closed ? 'Z' : '');
}
function add(id, d, fill) {
  const p = document.createElementNS(NS, 'path');
  p.setAttribute('d', d);
  if (fill) p.setAttribute('fill', fill);
  document.getElementById(id).append(p);
}
for (const [c, ring] of rings) {
  const d = ragged(ring.flatMap((p, i) => split(p, ring[(i + 1) % ring.length], 0)), true);
  add('base', d, C[c]);
  add('districts', d, C[c]);
}
for (const s of inner) add('inner', ragged(s.split(' ').map(p => { const [x, y] = p.split(',').map(Number); return [410 + x / 3, 300 + y / 3]; }), false));

const names = ['<1,3', '1,31 - 1,80', '1,81 - 2,10', '2,11 - 2,50', '2,51 - 3,30', '3,31 - 3,70', '3,71 - 5,50', '>5,51'];
document.getElementById('legend-box').innerHTML = names.map((n, i) => {
  const y = 342.5 + i * 18.5;
  return `<rect x="867.5" y="${Math.floor(y) + .5}" width="20" height="11" fill="${C[i + 1]}" stroke="#555"/><text font-size="12" x="893" y="${Math.round(y + 10.8)}" textLength="${i === 0 ? 26 : i === 7 ? 31 : 59}" lengthAdjust="spacingAndGlyphs">${n.replace('<', '&lt;')}</text>`;
}).join('');

const rows = [['legend', 0, '<Legend>'], ['legend', 1, '<Legend>'], ['label', 1, 'Podíl cizinců v okresech...'], ['legend', 0, '<Legend>'], ['scale', 1, '<Měřítko>'], ['mapitem', 0, 'Mapa 2'], ['mapitem', 0, 'Mapa 4'], ['mapsel', 1, 'Mapa 5'], ['legend', 0, '<Legend>'], ['mapitem', 0, 'anamorfoza'], ['mapitem', 0, 'Mapa 1']];
document.getElementById('rows').innerHTML = rows.map(([ico, on, t]) => `<div class="row${ico === 'mapsel' ? ' sel' : ''}"><span class="box">${on ? '<svg width="12" height="12" viewBox="0 0 12 12"><path d="M2.500 6l2.500 4L9 2" fill="none" stroke="#000" stroke-width="2"/></svg>' : ''}</span><span class="box"></span><svg class="ico" width="14" height="14"><use href="#${ico}" width="14" height="14"/></svg><b>${t.replace('<', '&lt;')}</b></div>`).join('');
```
